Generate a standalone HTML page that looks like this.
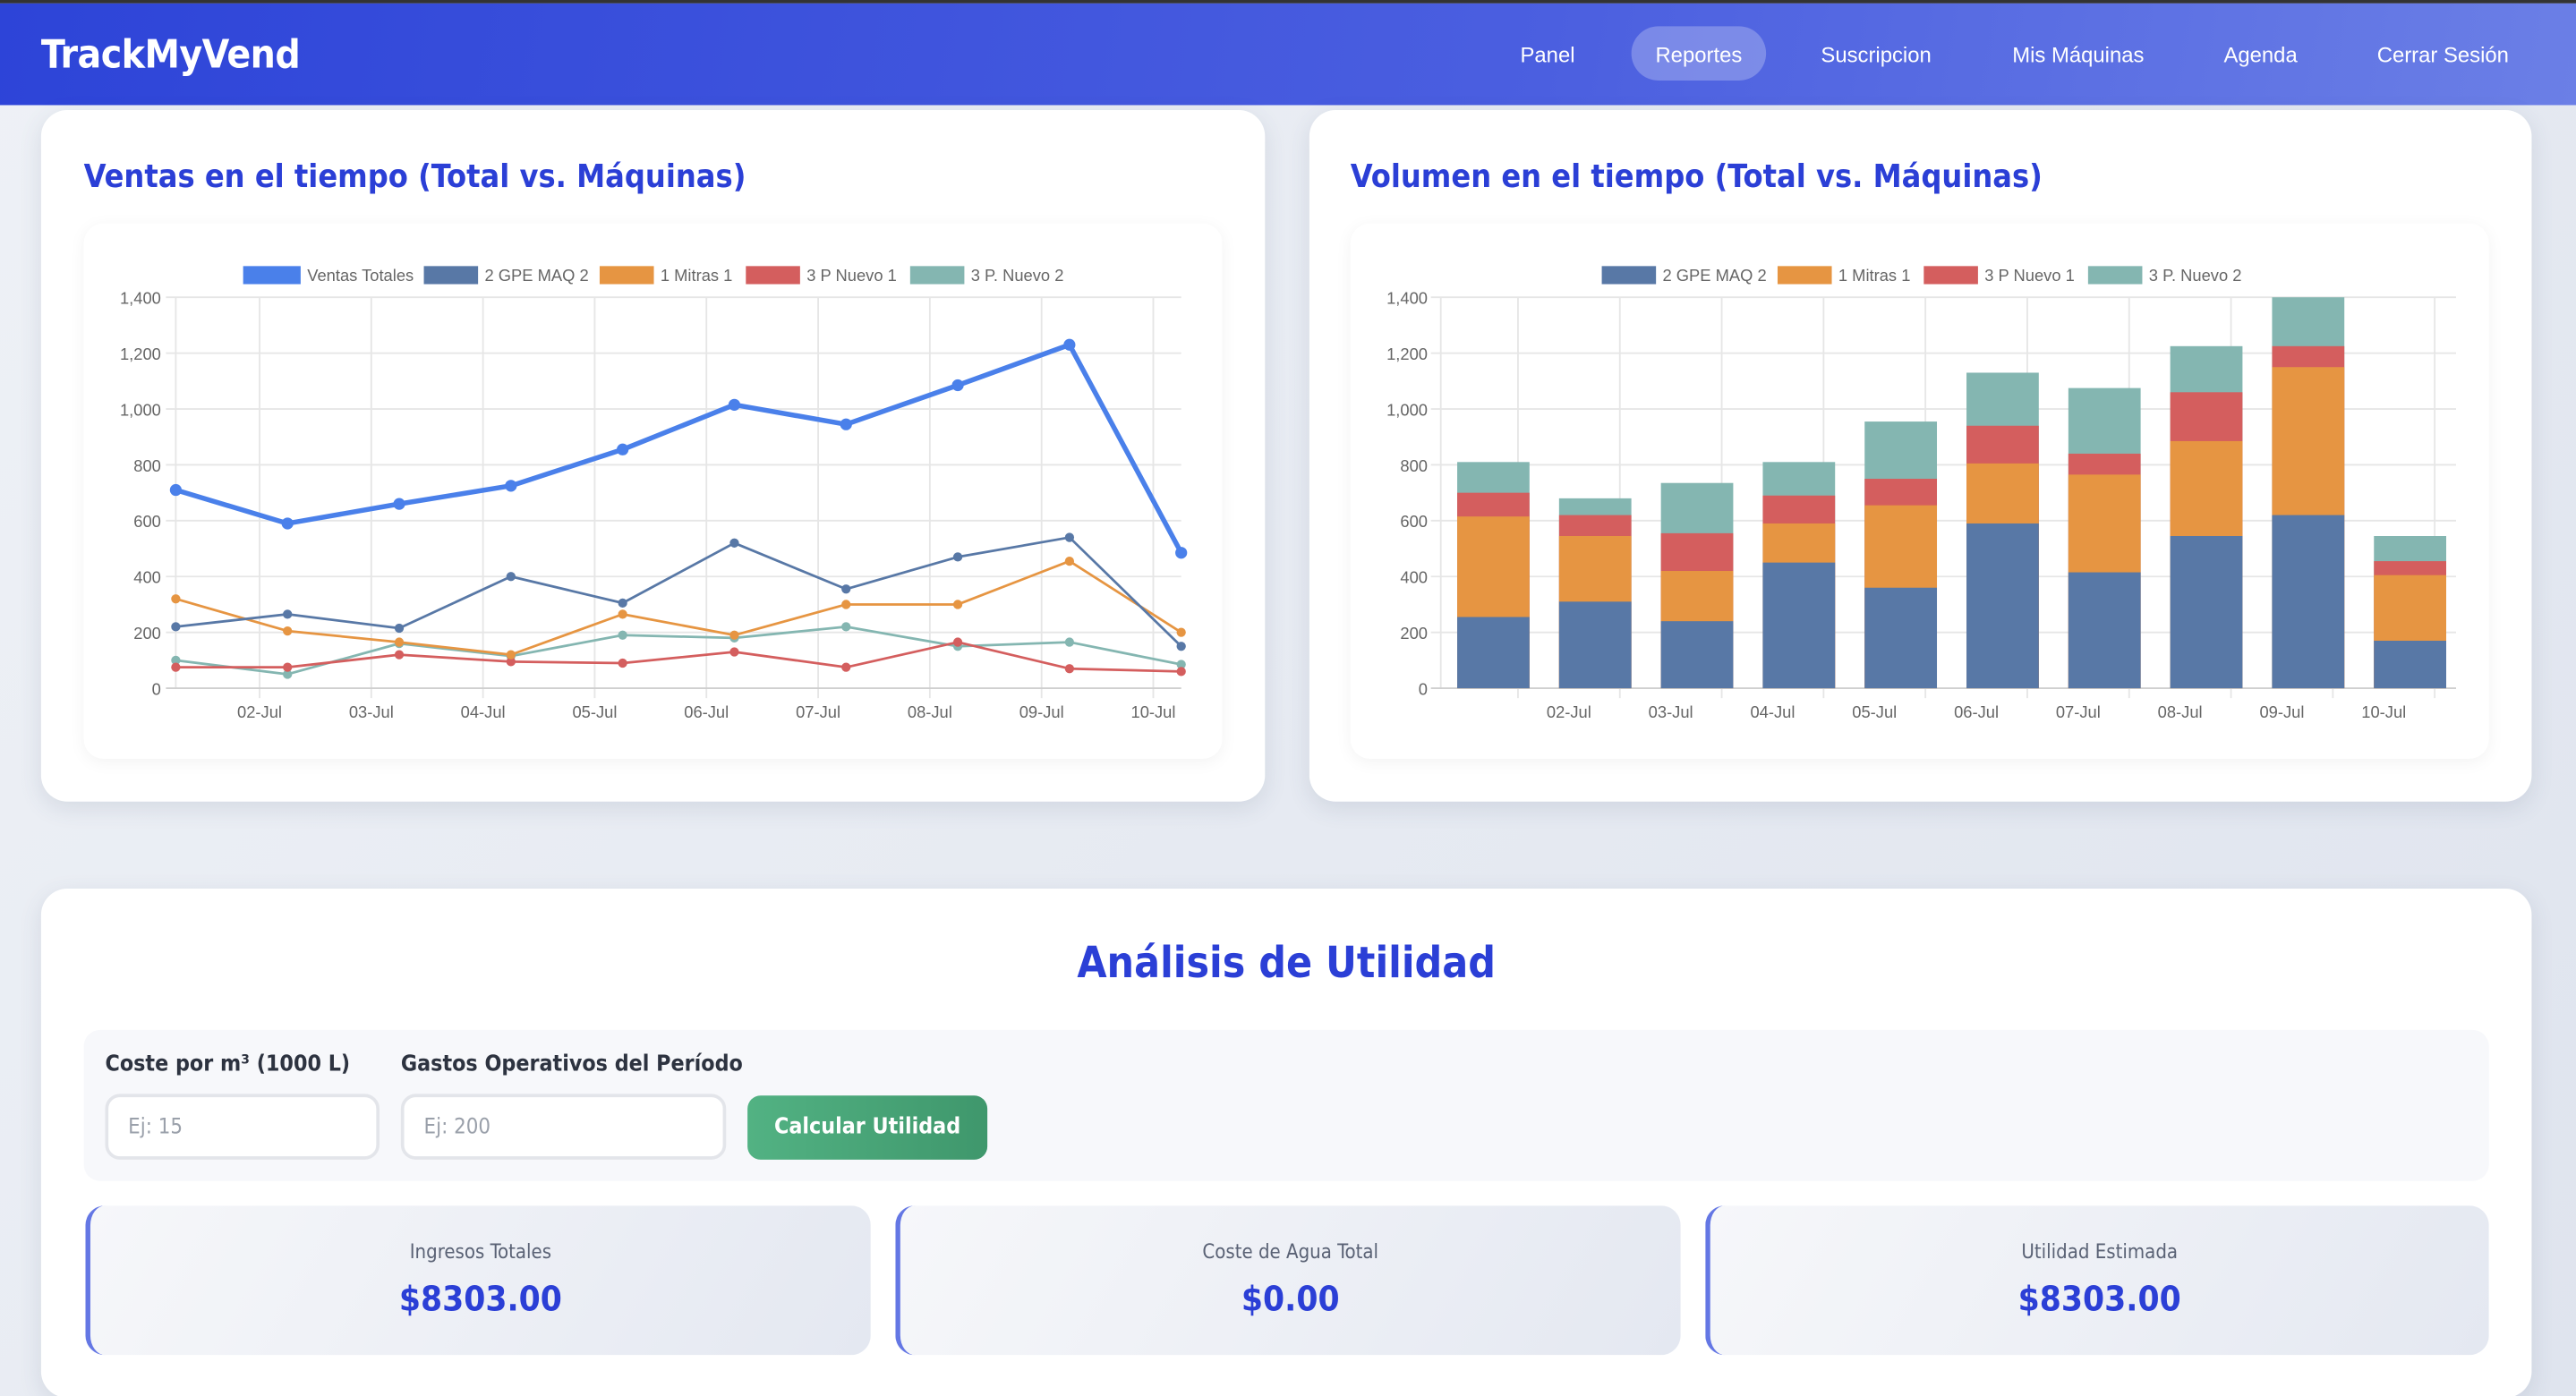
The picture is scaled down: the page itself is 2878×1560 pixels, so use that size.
<!DOCTYPE html>
<html><head><meta charset="utf-8">
<style>
html,body{margin:0;padding:0;width:2878px;height:1560px;overflow:hidden;background:#e6eaf2;}
#w{position:absolute;left:0;top:0;width:1568px;height:850px;transform:scale(1.83546);transform-origin:0 0;font-family:"Liberation Sans",sans-serif;background:linear-gradient(135deg,#eef1f6,#dfe4ee);overflow:hidden}
.nav{position:absolute;left:0;top:0;width:1568px;height:64px;background:linear-gradient(100deg,#2d44d8,#4b5fe0 60%,#6b7fe6);border-top:2px solid #333;box-sizing:border-box;}
.logo{position:absolute;left:25px;top:17px;color:#fff;font:bold 24px "DejaVu Sans Condensed","Liberation Sans",sans-serif;letter-spacing:-0.3px}
.ni{position:absolute;top:24px;color:#fff;font-size:13px;transform:translateX(-50%);white-space:nowrap}
.pill{position:absolute;left:993px;top:14px;width:82px;height:33px;border-radius:17px;background:rgba(255,255,255,0.25)}
.card{position:absolute;background:#fff;border-radius:16px;box-shadow:0 4px 14px rgba(60,70,110,0.12)}
.ttl{position:absolute;color:#2b3fd6;font:bold 19.5px "DejaVu Sans Condensed","Liberation Sans",sans-serif;white-space:nowrap}
.inner{position:absolute;background:#fff;border-radius:12px;box-shadow:0 2px 10px rgba(0,0,0,0.05)}
svg text{font-family:"Liberation Sans",sans-serif}
.lbl{position:absolute;top:640px;font:bold 13.5px "DejaVu Sans Condensed","Liberation Sans",sans-serif;color:#2d3340}
.inp{position:absolute;top:666px;height:40px;border:2px solid #e3e5ea;border-radius:9px;background:#fff;box-sizing:border-box;color:#9aa0aa;font:13px "DejaVu Sans Condensed","Liberation Sans",sans-serif;padding:11px 12px}
.btn{position:absolute;left:455px;top:667px;width:146px;height:39px;border-radius:8px;background:linear-gradient(90deg,#52b283,#3f976c);color:#fff;font:bold 13.5px "DejaVu Sans Condensed","Liberation Sans",sans-serif;text-align:center;line-height:39px}
.st{position:absolute;top:734px;height:91px;border-radius:12px;border-left:3px solid #6477e4;background:linear-gradient(120deg,#f6f7fa,#e4e8f1);box-sizing:border-box;text-align:center}
.st .a{margin-top:21px;font:12px "DejaVu Sans Condensed","Liberation Sans",sans-serif;color:#5a6275}
.st .b{margin-top:10px;font:bold 21px "DejaVu Sans Condensed","Liberation Sans",sans-serif;color:#2b3fd6}
</style></head><body><div id="w">
<div class="nav">
<div class="logo">TrackMyVend</div>
<div class="pill"></div>
<div class="ni" style="left:942px">Panel</div>
<div class="ni" style="left:1034px">Reportes</div>
<div class="ni" style="left:1142px">Suscripcion</div>
<div class="ni" style="left:1265px">Mis Máquinas</div>
<div class="ni" style="left:1376px">Agenda</div>
<div class="ni" style="left:1487px">Cerrar Sesión</div>
</div>

<div class="card" style="left:25px;top:67px;width:745px;height:421px"></div>
<div class="ttl" style="left:51px;top:96px">Ventas en el tiempo (Total vs. Máquinas)</div>
<div class="inner" style="left:51px;top:136px;width:693px;height:326px"></div>

<div class="card" style="left:797px;top:67px;width:744px;height:421px"></div>
<div class="ttl" style="left:822px;top:96px">Volumen en el tiempo (Total vs. Máquinas)</div>
<div class="inner" style="left:822px;top:136px;width:693px;height:326px"></div>

<svg style="position:absolute;left:0;top:0" width="1568" height="500" viewBox="0 0 1568 500">
<g stroke="#e6e6e6" stroke-width="1">
<line x1="101" y1="181" x2="719" y2="181"/><line x1="101" y1="215" x2="719" y2="215"/><line x1="101" y1="249" x2="719" y2="249"/><line x1="101" y1="283" x2="719" y2="283"/><line x1="101" y1="317" x2="719" y2="317"/><line x1="101" y1="351" x2="719" y2="351"/><line x1="101" y1="385" x2="719" y2="385"/>
<line x1="107" y1="181" x2="107" y2="419"/><line x1="158" y1="181" x2="158" y2="425"/><line x1="226" y1="181" x2="226" y2="425"/><line x1="294" y1="181" x2="294" y2="425"/><line x1="362" y1="181" x2="362" y2="425"/><line x1="430" y1="181" x2="430" y2="425"/><line x1="498" y1="181" x2="498" y2="425"/><line x1="566" y1="181" x2="566" y2="425"/><line x1="634" y1="181" x2="634" y2="425"/><line x1="702" y1="181" x2="702" y2="425"/>
<line x1="871" y1="181" x2="1495" y2="181"/><line x1="871" y1="215" x2="1495" y2="215"/><line x1="871" y1="249" x2="1495" y2="249"/><line x1="871" y1="283" x2="1495" y2="283"/><line x1="871" y1="317" x2="1495" y2="317"/><line x1="871" y1="351" x2="1495" y2="351"/><line x1="871" y1="385" x2="1495" y2="385"/>
<line x1="877" y1="181" x2="877" y2="419"/><line x1="924" y1="181" x2="924" y2="425"/><line x1="986" y1="181" x2="986" y2="425"/><line x1="1048" y1="181" x2="1048" y2="425"/><line x1="1110" y1="181" x2="1110" y2="425"/><line x1="1172" y1="181" x2="1172" y2="425"/><line x1="1234" y1="181" x2="1234" y2="425"/><line x1="1296" y1="181" x2="1296" y2="425"/><line x1="1358" y1="181" x2="1358" y2="425"/><line x1="1420" y1="181" x2="1420" y2="425"/><line x1="1482" y1="181" x2="1482" y2="425"/>
</g>
<g stroke="#cfcfcf"><line x1="101" y1="419" x2="719" y2="419"/><line x1="871" y1="419" x2="1495" y2="419"/></g>
<g font-size="10" fill="#666" text-anchor="end">
<text x="98" y="185">1,400</text><text x="98" y="219">1,200</text><text x="98" y="253">1,000</text><text x="98" y="287">800</text><text x="98" y="321">600</text><text x="98" y="355">400</text><text x="98" y="389">200</text><text x="98" y="423">0</text>
<text x="869" y="185">1,400</text><text x="869" y="219">1,200</text><text x="869" y="253">1,000</text><text x="869" y="287">800</text><text x="869" y="321">600</text><text x="869" y="355">400</text><text x="869" y="389">200</text><text x="869" y="423">0</text>
</g>
<g font-size="10" fill="#666" text-anchor="middle">
<text x="158" y="437">02-Jul</text><text x="226" y="437">03-Jul</text><text x="294" y="437">04-Jul</text><text x="362" y="437">05-Jul</text><text x="430" y="437">06-Jul</text><text x="498" y="437">07-Jul</text><text x="566" y="437">08-Jul</text><text x="634" y="437">09-Jul</text><text x="702" y="437">10-Jul</text>
<text x="955" y="437">02-Jul</text><text x="1017" y="437">03-Jul</text><text x="1079" y="437">04-Jul</text><text x="1141" y="437">05-Jul</text><text x="1203" y="437">06-Jul</text><text x="1265" y="437">07-Jul</text><text x="1327" y="437">08-Jul</text><text x="1389" y="437">09-Jul</text><text x="1451" y="437">10-Jul</text>
</g>
<g font-size="10" fill="#666">
<rect x="148" y="162" width="35" height="11" fill="#4a80ea"/><text x="187" y="171">Ventas Totales</text>
<rect x="258" y="162" width="33" height="11" fill="#5878a6"/><text x="295" y="171">2 GPE MAQ 2</text>
<rect x="365" y="162" width="33" height="11" fill="#e69542"/><text x="402" y="171">1 Mitras 1</text>
<rect x="454" y="162" width="33" height="11" fill="#d45e5e"/><text x="491" y="171">3 P Nuevo 1</text>
<rect x="554" y="162" width="33" height="11" fill="#84b6b1"/><text x="591" y="171">3 P. Nuevo 2</text>
<rect x="975" y="162" width="33" height="11" fill="#5878a6"/><text x="1012" y="171">2 GPE MAQ 2</text>
<rect x="1082" y="162" width="33" height="11" fill="#e69542"/><text x="1119" y="171">1 Mitras 1</text>
<rect x="1171" y="162" width="33" height="11" fill="#d45e5e"/><text x="1208" y="171">3 P Nuevo 1</text>
<rect x="1271" y="162" width="33" height="11" fill="#84b6b1"/><text x="1308" y="171">3 P. Nuevo 2</text>
</g>
<g fill="#84b6b1">
<rect x="887" y="281.3" width="44" height="137.7"/><rect x="949" y="303.4" width="44" height="115.6"/><rect x="1011" y="294.05" width="44" height="124.95"/><rect x="1073" y="281.3" width="44" height="137.7"/><rect x="1135" y="256.65" width="44" height="162.35"/><rect x="1197" y="226.9" width="44" height="192.1"/><rect x="1259" y="236.25" width="44" height="182.75"/><rect x="1321" y="210.75" width="44" height="208.25"/><rect x="1383" y="181" width="44" height="238"/><rect x="1445" y="326.35" width="44" height="92.65"/>
</g>
<g fill="#d45e5e">
<rect x="887" y="300" width="44" height="119"/><rect x="949" y="313.6" width="44" height="105.4"/><rect x="1011" y="324.65" width="44" height="94.35"/><rect x="1073" y="301.7" width="44" height="117.3"/><rect x="1135" y="291.5" width="44" height="127.5"/><rect x="1197" y="259.2" width="44" height="159.8"/><rect x="1259" y="276.2" width="44" height="142.8"/><rect x="1321" y="238.8" width="44" height="180.2"/><rect x="1383" y="210.75" width="44" height="208.25"/><rect x="1445" y="341.65" width="44" height="77.35"/>
</g>
<g fill="#e69542">
<rect x="887" y="314.45" width="44" height="104.55"/><rect x="949" y="326.35" width="44" height="92.65"/><rect x="1011" y="347.6" width="44" height="71.4"/><rect x="1073" y="318.7" width="44" height="100.3"/><rect x="1135" y="307.65" width="44" height="111.35"/><rect x="1197" y="282.15" width="44" height="136.85"/><rect x="1259" y="288.95" width="44" height="130.05"/><rect x="1321" y="268.55" width="44" height="150.45"/><rect x="1383" y="223.5" width="44" height="195.5"/><rect x="1445" y="350.15" width="44" height="68.85"/>
</g>
<g fill="#5878a6">
<rect x="887" y="375.65" width="44" height="43.35"/><rect x="949" y="366.3" width="44" height="52.7"/><rect x="1011" y="378.2" width="44" height="40.8"/><rect x="1073" y="342.5" width="44" height="76.5"/><rect x="1135" y="357.8" width="44" height="61.2"/><rect x="1197" y="318.7" width="44" height="100.3"/><rect x="1259" y="348.45" width="44" height="70.55"/><rect x="1321" y="326.35" width="44" height="92.65"/><rect x="1383" y="313.6" width="44" height="105.4"/><rect x="1445" y="390.1" width="44" height="28.9"/>
</g>
<g fill="none" stroke-linejoin="round">
<polyline stroke="#84b6b1" stroke-width="1.5" points="107,402 175,410.5 243,391.8 311,399.45 379,386.7 447,388.4 515,381.6 583,393.5 651,390.95 719,404.55"/>
<polyline stroke="#d45e5e" stroke-width="1.5" points="107,406.25 175,406.25 243,398.6 311,402.85 379,403.7 447,396.9 515,406.25 583,390.95 651,407.1 719,408.8"/>
<polyline stroke="#e69542" stroke-width="1.5" points="107,364.6 175,384.15 243,390.95 311,398.6 379,373.95 447,386.7 515,368 583,368 651,341.65 719,385"/>
<polyline stroke="#5878a6" stroke-width="1.5" points="107,381.6 175,373.95 243,382.45 311,351 379,367.15 447,330.6 515,358.65 583,339.1 651,327.2 719,393.5"/>
<polyline stroke="#4a80ea" stroke-width="3" points="107,298.3 175,318.7 243,306.8 311,295.75 379,273.65 447,246.45 515,258.35 583,234.55 651,209.9 719,336.55"/>
</g>
<g fill="#84b6b1"><circle cx="107" cy="402" r="2.8"/><circle cx="175" cy="410.5" r="2.8"/><circle cx="243" cy="391.8" r="2.8"/><circle cx="311" cy="399.45" r="2.8"/><circle cx="379" cy="386.7" r="2.8"/><circle cx="447" cy="388.4" r="2.8"/><circle cx="515" cy="381.6" r="2.8"/><circle cx="583" cy="393.5" r="2.8"/><circle cx="651" cy="390.95" r="2.8"/><circle cx="719" cy="404.55" r="2.8"/></g>
<g fill="#d45e5e"><circle cx="107" cy="406.25" r="2.8"/><circle cx="175" cy="406.25" r="2.8"/><circle cx="243" cy="398.6" r="2.8"/><circle cx="311" cy="402.85" r="2.8"/><circle cx="379" cy="403.7" r="2.8"/><circle cx="447" cy="396.9" r="2.8"/><circle cx="515" cy="406.25" r="2.8"/><circle cx="583" cy="390.95" r="2.8"/><circle cx="651" cy="407.1" r="2.8"/><circle cx="719" cy="408.8" r="2.8"/></g>
<g fill="#e69542"><circle cx="107" cy="364.6" r="2.8"/><circle cx="175" cy="384.15" r="2.8"/><circle cx="243" cy="390.95" r="2.8"/><circle cx="311" cy="398.6" r="2.8"/><circle cx="379" cy="373.95" r="2.8"/><circle cx="447" cy="386.7" r="2.8"/><circle cx="515" cy="368" r="2.8"/><circle cx="583" cy="368" r="2.8"/><circle cx="651" cy="341.65" r="2.8"/><circle cx="719" cy="385" r="2.8"/></g>
<g fill="#5878a6"><circle cx="107" cy="381.6" r="2.8"/><circle cx="175" cy="373.95" r="2.8"/><circle cx="243" cy="382.45" r="2.8"/><circle cx="311" cy="351" r="2.8"/><circle cx="379" cy="367.15" r="2.8"/><circle cx="447" cy="330.6" r="2.8"/><circle cx="515" cy="358.65" r="2.8"/><circle cx="583" cy="339.1" r="2.8"/><circle cx="651" cy="327.2" r="2.8"/><circle cx="719" cy="393.5" r="2.8"/></g>
<g fill="#4a80ea"><circle cx="107" cy="298.3" r="3.6"/><circle cx="175" cy="318.7" r="3.6"/><circle cx="243" cy="306.8" r="3.6"/><circle cx="311" cy="295.75" r="3.6"/><circle cx="379" cy="273.65" r="3.6"/><circle cx="447" cy="246.45" r="3.6"/><circle cx="515" cy="258.35" r="3.6"/><circle cx="583" cy="234.55" r="3.6"/><circle cx="651" cy="209.9" r="3.6"/><circle cx="719" cy="336.55" r="3.6"/></g>
</svg>

<div class="card" style="left:25px;top:541px;width:1516px;height:310px"></div>
<div class="ttl" style="left:0;width:1566px;text-align:center;top:572px;font-size:26px">Análisis de Utilidad</div>
<div style="position:absolute;left:51px;top:627px;width:1464px;height:92px;background:#f7f8fb;border-radius:10px"></div>
<div class="lbl" style="left:64px">Coste por m³ (1000 L)</div>
<div class="lbl" style="left:244px">Gastos Operativos del Período</div>
<div class="inp" style="left:64px;width:167px">Ej: 15</div>
<div class="inp" style="left:244px;width:198px">Ej: 200</div>
<div class="btn">Calcular Utilidad</div>
<div class="st" style="left:52px;width:478px"><div class="a">Ingresos Totales</div><div class="b">$8303.00</div></div>
<div class="st" style="left:545px;width:478px"><div class="a">Coste de Agua Total</div><div class="b">$0.00</div></div>
<div class="st" style="left:1038px;width:477px"><div class="a">Utilidad Estimada</div><div class="b">$8303.00</div></div>
</div></body></html>
